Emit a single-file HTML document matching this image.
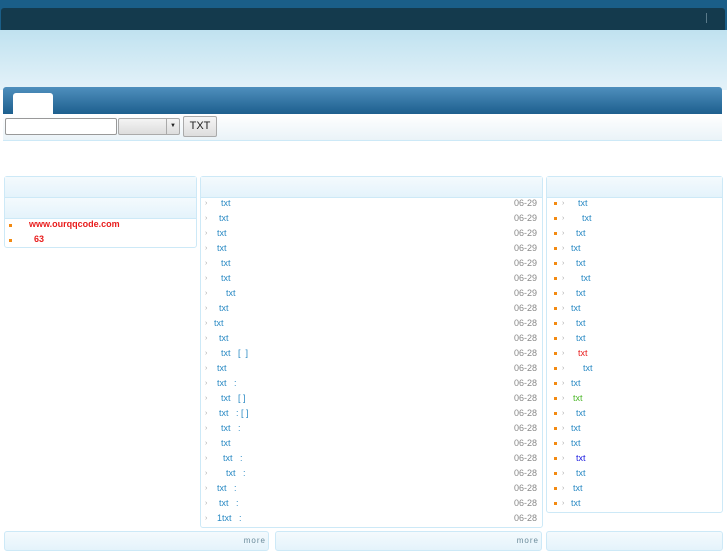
<!DOCTYPE html>
<html><head><meta charset="utf-8"><style>
*{margin:0;padding:0;box-sizing:border-box}
body{width:727px;height:545px;overflow:hidden;background:#fff;font-family:"Liberation Sans","Noto Sans CJK SC",sans-serif;font-size:9px;position:relative}
.a{position:absolute}
.box{position:absolute;border:1px solid #cde9f7;border-radius:3px;background:#fff}
.hd{position:absolute;left:0;right:0;background:linear-gradient(#f4fafd,#e4f3fb);border-bottom:1px solid #cde9f7}
.r{position:absolute;height:15px;line-height:15px;color:#2a8ac4;white-space:nowrap}
.d{position:absolute;right:5px;color:#888}
.ar{position:absolute;left:4px;color:#aaa;font-size:7px}
.dot{position:absolute;width:3px;height:3px;background:#f28a12;top:6px}
</style></head><body>
<div class="a" style="left:0;top:0;width:727px;height:30px;background:#1a5e88"></div>
<div class="a" style="left:1px;top:8px;width:724px;height:22px;background:#143a4d;border-radius:3px 3px 0 0"></div>
<div class="a" style="left:0;top:30px;width:727px;height:60px;background:linear-gradient(#c0e2f0,#e4f2f9)"></div>
<div class="a" style="left:706px;top:13px;width:1px;height:10px;background:#5a7a8a"></div>
<div class="a" style="left:3px;top:87px;width:719px;height:27px;background:linear-gradient(#4f8fbd,#1d5f8e);border-radius:3px 3px 0 0"></div>
<div class="a" style="left:13px;top:93px;width:40px;height:21px;background:#fff;border-radius:3px 3px 0 0"></div>
<div class="a" style="left:3px;top:114px;width:719px;height:27px;background:linear-gradient(#fff,#eaf3f8);border-bottom:1px solid #cde9f7"></div>
<div class="a" style="left:5px;top:118px;width:112px;height:17px;border:1px solid #999;border-radius:2px;background:#fff"></div>
<div class="a" style="left:118px;top:118px;width:62px;height:17px;border:1px solid #aaa;border-radius:2px;background:linear-gradient(#f4f4f4,#ddd)"></div>
<div class="a" style="left:166px;top:118px;width:1px;height:17px;background:#aaa"></div>
<div class="a" style="left:170px;top:123px;font-size:6px;line-height:7px;color:#222">▼</div>
<div class="a" style="left:183px;top:116px;width:34px;height:21px;border:1px solid #aaa;border-radius:2px;background:linear-gradient(#f6f6f6,#ddd);font-size:11px;line-height:19px;text-align:center;color:#222">TXT</div>

<div class="box" style="left:4px;top:176px;width:193px;height:72px">
<div class="hd" style="top:0;height:21px"></div>
<div class="hd" style="top:21px;height:21px"></div>
<div class="dot" style="left:4px;top:47px"></div><div class="a" style="left:24px;top:42px;color:#e81c1c;font-weight:bold;font-size:9px">www.ourqqcode.com</div>
<div class="dot" style="left:4px;top:62px"></div><div class="a" style="left:29px;top:57px;color:#e81c1c;font-weight:bold;font-size:9px">63</div>
</div>

<div class="box" style="left:200px;top:176px;width:343px;height:352px">
<div class="hd" style="top:0;height:21px"></div>
<div id="mid"></div>
</div>
<div class="box" style="left:546px;top:176px;width:177px;height:337px">
<div class="hd" style="top:0;height:21px"></div>
<div id="rt"></div>
</div>

<div class="box" style="left:4px;top:531px;width:265px;height:20px;background:linear-gradient(#f4fafd,#e4f3fb)"><span class="a" style="right:2px;top:4px;color:#6a8a9a;font-size:8px;letter-spacing:1px">more</span></div>
<div class="box" style="left:275px;top:531px;width:267px;height:20px;background:linear-gradient(#f4fafd,#e4f3fb)"><span class="a" style="right:2px;top:4px;color:#6a8a9a;font-size:8px;letter-spacing:1px">more</span></div>
<div class="box" style="left:546px;top:531px;width:177px;height:20px;background:linear-gradient(#f4fafd,#e4f3fb)"></div>
<script>
var m=[[221,'txt'],[219,'txt'],[217,'txt'],[217,'txt'],[221,'txt'],[221,'txt'],[226,'txt'],[219,'txt'],[214,'txt'],[219,'txt'],[221,'txt&nbsp;&nbsp;&nbsp;[&nbsp;&nbsp;]'],[217,'txt'],[217,'txt&nbsp;&nbsp;&nbsp;:'],[221,'txt&nbsp;&nbsp;&nbsp;[&nbsp;]'],[219,'txt&nbsp;&nbsp;&nbsp;:&nbsp;[&nbsp;]'],[221,'txt&nbsp;&nbsp;&nbsp;:'],[221,'txt'],[223,'txt&nbsp;&nbsp;&nbsp;:'],[226,'txt&nbsp;&nbsp;&nbsp;:'],[217,'txt&nbsp;&nbsp;&nbsp;:'],[219,'txt&nbsp;&nbsp;&nbsp;:'],[217,'1txt&nbsp;&nbsp;&nbsp;:']];
var h='';m.forEach(function(r,i){h+='<div class="r" style="left:0;right:0;top:'+(19+i*15)+'px"><span class="ar">›</span><span class="a" style="left:'+(r[0]-201)+'px">'+r[1]+'</span><span class="d">'+(i<7?'06-29':'06-28')+'</span></div>'});
document.getElementById('mid').innerHTML=h;
var t=[578,582,576,571,576,581,576,571,576,576,578,583,571,573,576,571,571,576,576,573,571];
var c={10:'#e81c1c',13:'#4cb82a',17:'#1a1ae0'};h='';
t.forEach(function(x,i){h+='<div class="r" style="left:0;right:0;top:'+(19+i*15)+'px;color:'+(c[i]||'#2a8ac4')+'"><span class="dot" style="left:7px"></span><span class="ar" style="left:15px">›</span><span class="a" style="left:'+(x-547)+'px">txt</span></div>'});
document.getElementById('rt').innerHTML=h;
</script>
</body></html>
